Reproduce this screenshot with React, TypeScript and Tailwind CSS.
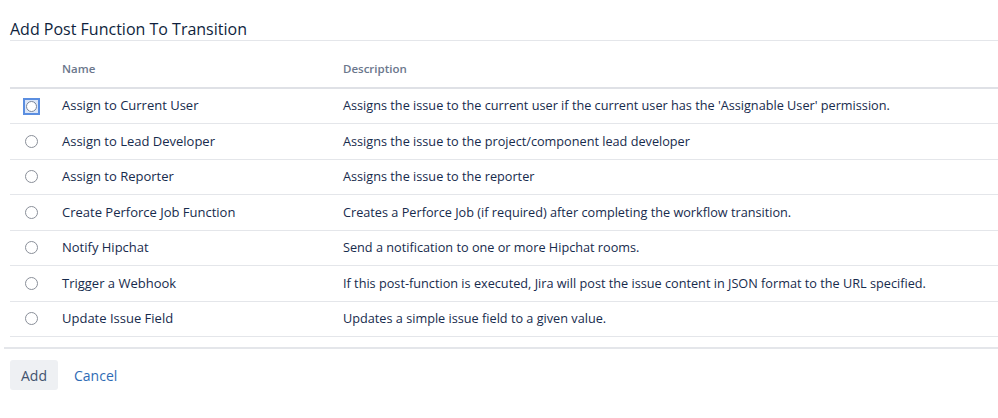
const rows = [
  { name: 'Assign to Current User', desc: "Assigns the issue to the current user if the current user has the 'Assignable User' permission." },
  { name: 'Assign to Lead Developer', desc: 'Assigns the issue to the project/component lead developer' },
  { name: 'Assign to Reporter', desc: 'Assigns the issue to the reporter' },
  { name: 'Create Perforce Job Function', desc: 'Creates a Perforce Job (if required) after completing the workflow transition.' },
  { name: 'Notify Hipchat', desc: 'Send a notification to one or more Hipchat rooms.' },
  { name: 'Trigger a Webhook', desc: 'If this post-function is executed, Jira will post the issue content in JSON format to the URL specified.' },
  { name: 'Update Issue Field', desc: 'Updates a simple issue field to a given value.' },
];

export default function App() {
  return (
    <div className="w-[998px] h-[418px] bg-white text-[#172b4d] font-['Open_Sans',sans-serif] text-[13px]">
      <div className="pl-[10px] pt-[19px]">
        <h2 className="text-[16px] font-medium leading-[20px] pb-[1px] border-b border-[#e4e6ea] text-[#0f1f3d]">
          Add Post Function To Transition
        </h2>
        <table className="w-full border-collapse">
          <thead>
            <tr className="h-[47px] border-b-2 border-[#dfe1e6]">
              <th className="w-[42px]" />
              <th className="w-[281px] pl-[10px] text-left text-[11.5px] font-semibold text-[#6b778c] pt-[10px]">Name</th>
              <th className="pl-[10px] text-left text-[11.5px] font-semibold text-[#6b778c] pt-[10px]">Description</th>
            </tr>
          </thead>
          <tbody>
            {rows.map((r, i) => (
              <tr key={r.name} className="h-[35.5px] border-b border-[#e4e6ea]">
                <td className="text-center">
                  <div className="flex justify-center pl-[1px]">
                    {i === 0 ? (
                      <span className="flex items-center justify-center w-[17px] h-[17px] border-2 border-[#5b8ee0] bg-[#dbe6f8]">
                        <span className="w-[11px] h-[11px] rounded-full border border-[#7a869a] bg-white" />
                      </span>
                    ) : (
                      <span className="w-[13px] h-[13px] rounded-full border border-[#8a8f99] bg-white" />
                    )}
                  </div>
                </td>
                <td className="pl-[10px]">{r.name}</td>
                <td className="pl-[10px] text-[12.7px]">{r.desc}</td>
              </tr>
            ))}
          </tbody>
        </table>
      </div>
      <div className="ml-[4px] mt-[10px] border-t-2 border-[#e4e6ea] pl-[6px] pt-[11px] flex items-center gap-[16px]">
        <button className="h-[30px] w-[48px] rounded-[3px] bg-[#eef0f3] text-[#42526e] text-[14px]">Add</button>
        <a className="text-[14px] text-[#2e6bb5]">Cancel</a>
      </div>
    </div>
  );
}
